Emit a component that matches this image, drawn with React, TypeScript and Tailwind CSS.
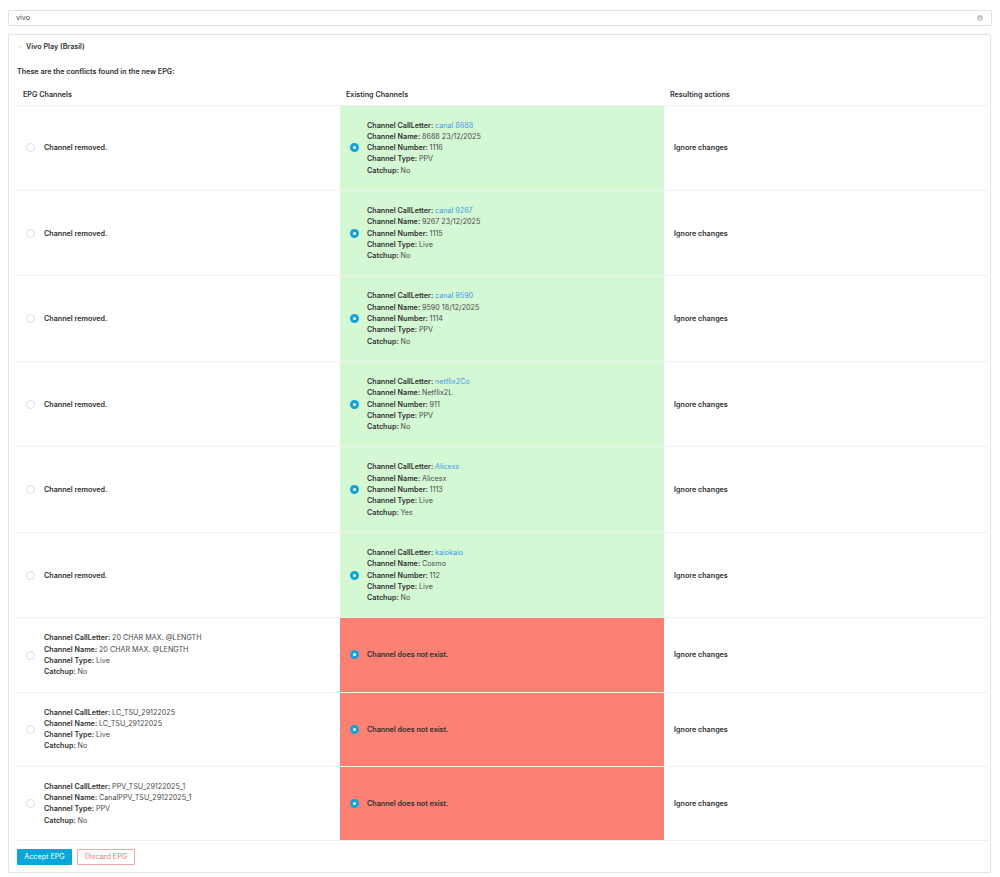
import { FC } from "react";
import { ChevronDown } from "lucide-react";

interface Existing {
    callLetter: string;
    name: string;
    number: string;
    type: string;
    catchup: string;
}

interface EpgChannel {
    callLetter: string;
    name: string;
    type: string;
    catchup: string;
}

const existing: Existing[] = [
    { callLetter: "canal 8688", name: "8688 23/12/2025", number: "1116", type: "PPV", catchup: "No" },
    { callLetter: "canal 9267", name: "9267 23/12/2025", number: "1115", type: "Live", catchup: "No" },
    { callLetter: "canal 9590", name: "9590 18/12/2025", number: "1114", type: "PPV", catchup: "No" },
    { callLetter: "netflix2Co", name: "Netflix2L", number: "911", type: "PPV", catchup: "No" },
    { callLetter: "Alicexs", name: "Alicesx", number: "1113", type: "Live", catchup: "Yes" },
    { callLetter: "kaiokaio", name: "Cosmo", number: "112", type: "Live", catchup: "No" },
];

const added: EpgChannel[] = [
    { callLetter: "20 CHAR MAX. @LENGTH", name: "20 CHAR MAX. @LENGTH", type: "Live", catchup: "No" },
    { callLetter: "LC_TSU_29122025", name: "LC_TSU_29122025", type: "Live", catchup: "No" },
    { callLetter: "PPV_TSU_29122025_1", name: "CanalPPV_TSU_29122025_1", type: "PPV", catchup: "No" },
];

const Radio: FC<{ checked?: boolean }> = ({ checked }) =>
    checked ? (
        <span className="flex h-[9px] w-[9px] shrink-0 items-center justify-center rounded-full bg-[#12a2da]">
            <span className="h-[3px] w-[3px] rounded-full bg-white" />
        </span>
    ) : (
        <span className="h-[9px] w-[9px] shrink-0 rounded-full border border-[#dcdcdc] bg-white" />
    );

const Field: FC<{ label: string; value: string; link?: boolean }> = ({ label, value, link }) => (
    <div>
        <span className="font-semibold text-[#2f2f2f]">{label}: </span>
        <span className={link ? "text-[#3f9de8]" : "text-[#4a4a4a]"}>{value}</span>
    </div>
);

export default function App() {
    return (
        <div className="min-h-screen bg-white px-2 pt-[10px] text-[7.2px] text-[#333]" style={{ fontFamily: "Inter, 'Noto Sans', sans-serif" }}>
            <div className="flex h-[16px] items-center rounded-[2px] border border-[#e2e2e2] pl-[7px] pr-[8px]">
                <span className="flex-1 text-[#444]">vivo</span>
                <span className="flex h-[6px] w-[6px] items-center justify-center rounded-full bg-[#c8c8c8] text-[5px] leading-none text-white">×</span>
            </div>

            <div className="mt-[8px] mr-[1px] rounded-[2px] border border-[#e4e4e4] px-[8px] pt-[6px] pb-[7px] shadow-[0_0_2px_rgba(0,0,0,0.06)]">
                <div className="flex h-[12px] items-center gap-[3px] font-semibold text-[#2f2f2f]">
                    <ChevronDown size={6} className="text-[#aaa]" />
                    <span>Vivo Play (Brasil)</span>
                </div>

                <div className="mt-[13px] flex h-[12px] items-center font-semibold text-[#2f2f2f]">
                    These are the conflicts found in the new EPG:
                </div>

                <table className="mt-[8px] w-[971px] table-fixed border-collapse">
                    <thead>
                        <tr className="border-b border-[#efefef]">
                            <th className="h-[19px] w-[323px] pl-[6px] text-left font-semibold text-[#2f2f2f]">EPG Channels</th>
                            <th className="w-[324px] pl-[6px] text-left font-semibold text-[#2f2f2f]">Existing Channels</th>
                            <th className="w-[324px] pl-[6px] text-left font-semibold text-[#2f2f2f]">Resulting actions</th>
                        </tr>
                    </thead>
                    <tbody className="leading-[11.3px]">
                        {existing.map((c) => (
                            <tr key={c.callLetter} className="border-b border-[#efefef]">
                                <td className="py-[14px] pl-[9px]">
                                    <div className="flex items-center gap-[9px]">
                                        <Radio />
                                        <span className="font-semibold text-[#2f2f2f]">Channel removed.</span>
                                    </div>
                                </td>
                                <td className="bg-[#d4f7d4] py-[14px] pl-[10px]">
                                    <div className="flex items-center gap-[8px]">
                                        <Radio checked />
                                        <div>
                                            <Field label="Channel CallLetter" value={c.callLetter} link />
                                            <Field label="Channel Name" value={c.name} />
                                            <Field label="Channel Number" value={c.number} />
                                            <Field label="Channel Type" value={c.type} />
                                            <Field label="Catchup" value={c.catchup} />
                                        </div>
                                    </div>
                                </td>
                                <td className="pl-[10px] font-semibold text-[#2f2f2f]">Ignore changes</td>
                            </tr>
                        ))}
                        {added.map((c) => (
                            <tr key={c.callLetter} className="border-b border-[#efefef]">
                                <td className="py-[14px] pl-[9px]">
                                    <div className="flex items-center gap-[9px]">
                                        <Radio />
                                        <div>
                                            <Field label="Channel CallLetter" value={c.callLetter} />
                                            <Field label="Channel Name" value={c.name} />
                                            <Field label="Channel Type" value={c.type} />
                                            <Field label="Catchup" value={c.catchup} />
                                        </div>
                                    </div>
                                </td>
                                <td className="bg-[#fa8174] pl-[10px]">
                                    <div className="flex items-center gap-[8px]">
                                        <Radio checked />
                                        <span className="font-semibold text-[#2f2f2f]">Channel does not exist.</span>
                                    </div>
                                </td>
                                <td className="pl-[10px] font-semibold text-[#2f2f2f]">Ignore changes</td>
                            </tr>
                        ))}
                    </tbody>
                </table>

                <div className="mt-[8px] flex gap-[5px]">
                    <button className="h-[16px] w-[55px] rounded-[1px] bg-[#0aa6d9] text-white">Accept EPG</button>
                    <button className="h-[16px] w-[58px] rounded-[1px] border border-[#f9a3a3] bg-white text-[#f77a7a]">Discard EPG</button>
                </div>
            </div>
        </div>
    );
}
